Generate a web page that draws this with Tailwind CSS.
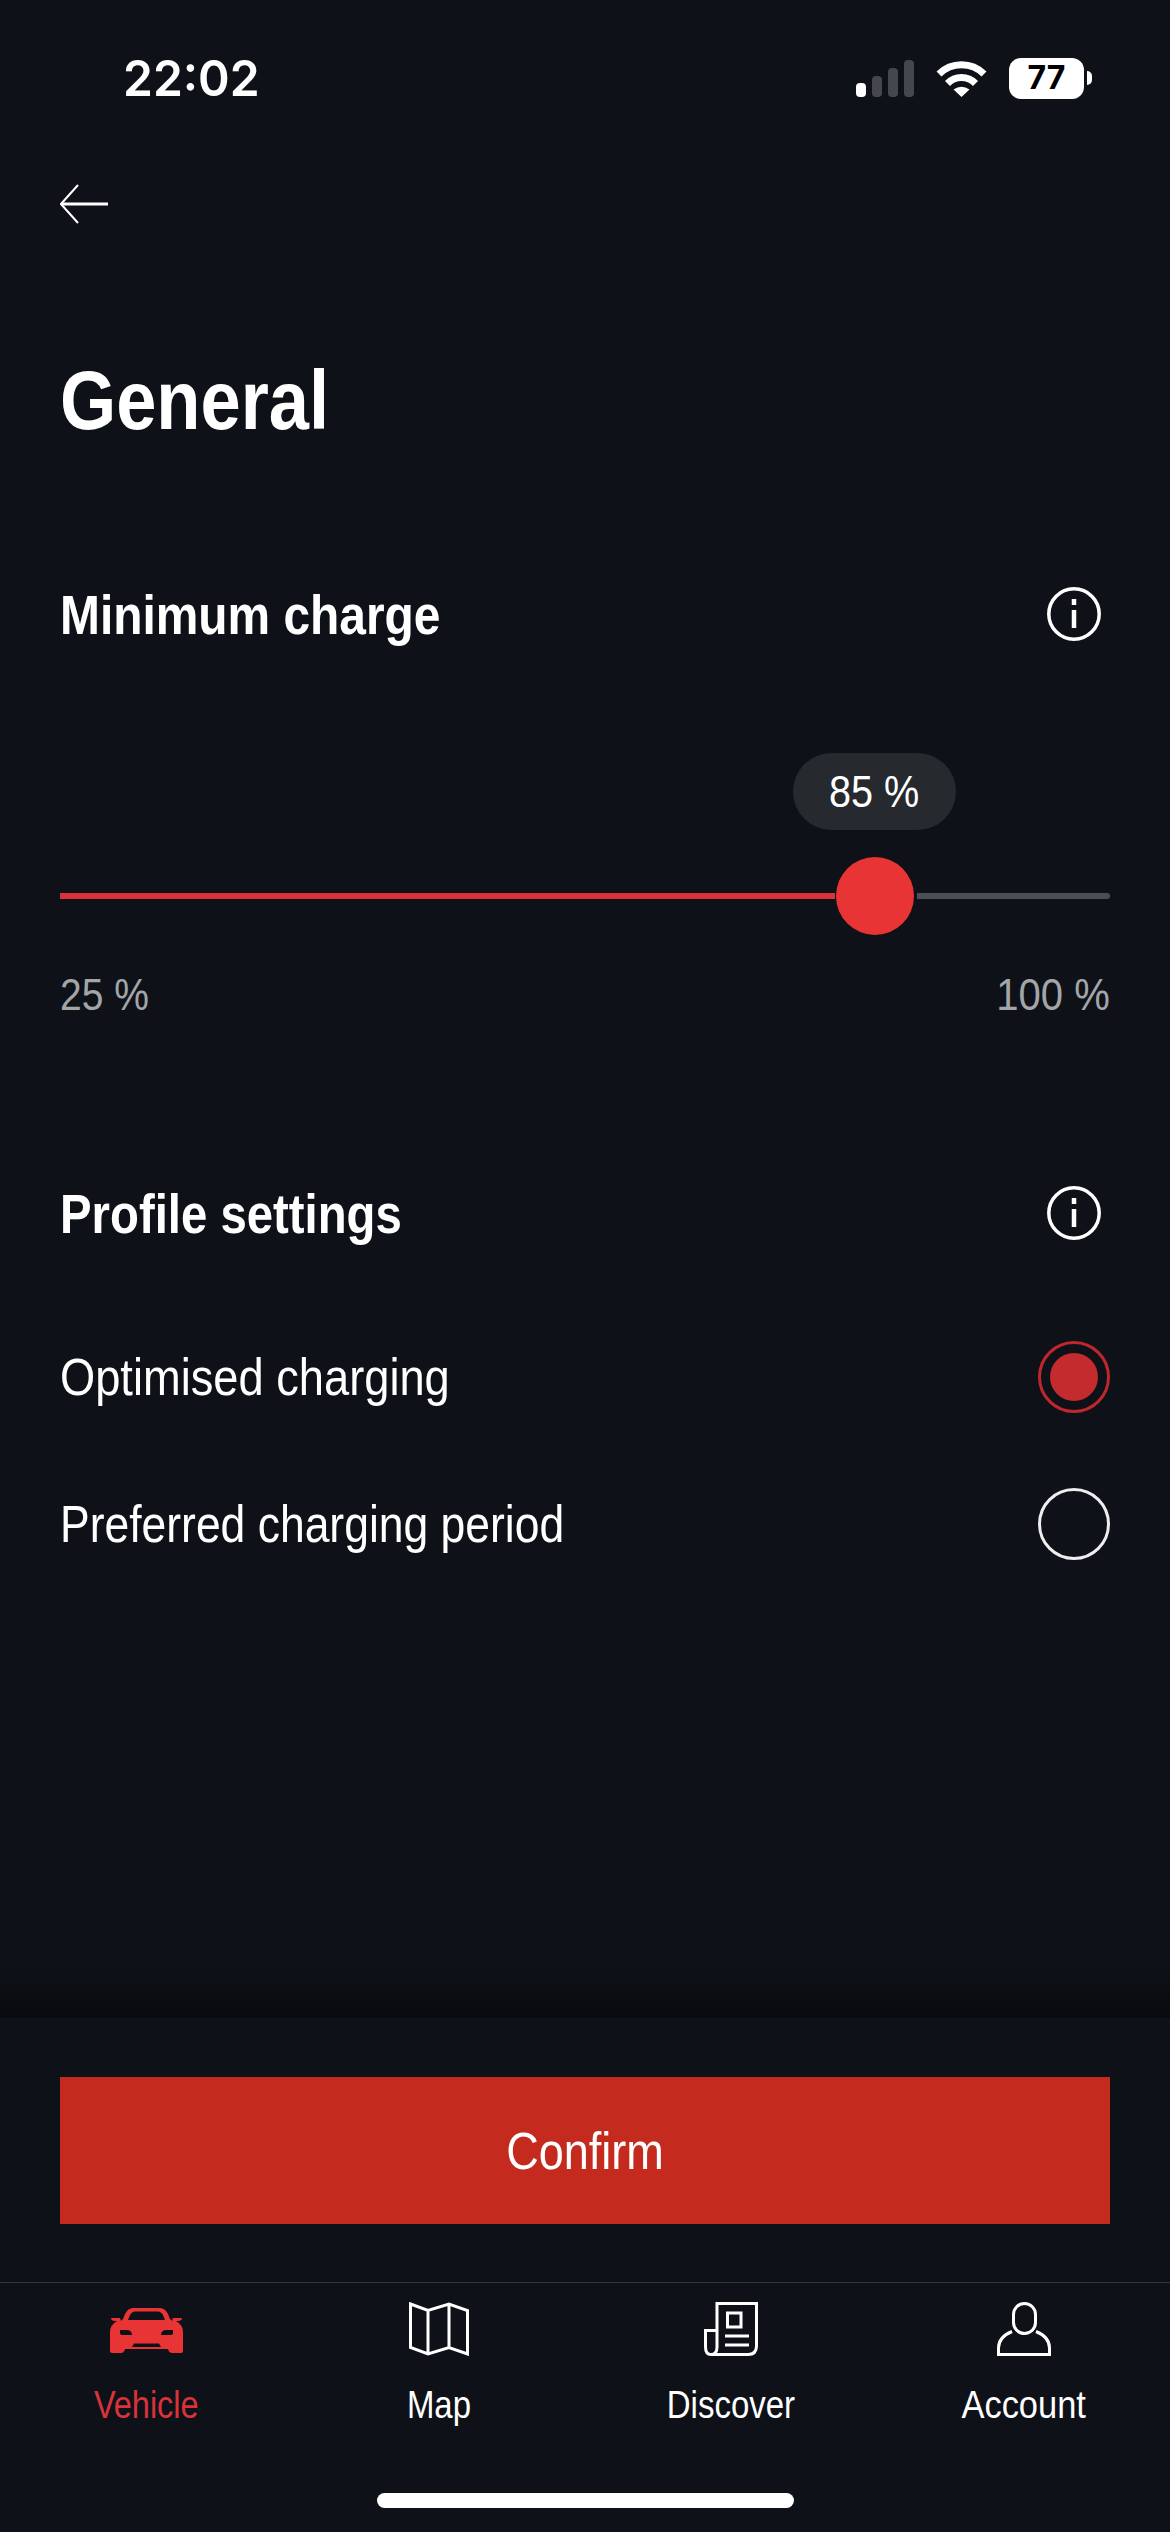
<!DOCTYPE html>
<html lang="en">
<head>
  <meta charset="UTF-8">
  <title>General</title>
  <script src="https://cdn.jsdelivr.net/npm/@tailwindcss/browser@4"></script>
</head>
<body class="bg-[#0e1218]">
  <div class="w-[1170px] h-[2532px] flex flex-col text-white font-['Liberation_Sans',sans-serif]">
    <!-- Status bar -->
    <div class="h-[156px] pl-[123px] pr-[78px] flex items-center justify-between">
      <span class="inline-block origin-left scale-x-[0.96] font-['Inter',sans-serif] font-semibold text-[50px] leading-none">22:02</span>
      <div class="flex items-center">
        <svg width="58" height="37" viewBox="0 0 58 37" fill="#44474c">
          <rect x="0" y="23" width="10" height="14" rx="4" fill="#fff"/>
          <rect x="16" y="16" width="10" height="21" rx="4"/>
          <rect x="32" y="8" width="10" height="29" rx="4"/>
          <rect x="48" y="0" width="10" height="37" rx="4"/>
        </svg>
        <svg class="ml-[22px]" width="51" height="37" viewBox="0 0 51 37" fill="none" stroke="#fff" stroke-width="7">
          <path d="M3 14A32 32 0 0 1 48 14"/>
          <path d="M11.5 23.5A19.5 19.5 0 0 1 39.5 23.5"/>
          <path d="M25.5 37L17.5 29.5Q25.5 24 33.5 29.5Z" fill="#fff" stroke="none"/>
        </svg>
        <div class="ml-[22px] w-[75px] h-[41px] rounded-[12px] bg-white text-black flex items-center justify-center font-['Inter',sans-serif] font-bold text-[32px] leading-none">77</div>
        <div class="ml-[3px] w-[5px] h-[14px] rounded-r-full bg-white"></div>
      </div>
    </div>

    <!-- Back -->
    <div class="h-[96px] pl-[60px] flex items-center">
      <svg width="48" height="40" viewBox="0 0 48 40" fill="none" stroke="#fff" stroke-width="2">
        <path d="M48 20H1" stroke-width="3"/>
        <path d="M18 1L1 20L18 39"/>
      </svg>
    </div>

    <main class="px-[60px] flex flex-col">
      <h1 class="mt-[96px] pt-[2px] h-[100px] leading-[100px] text-[84px] font-bold origin-left scale-x-[0.86]">General</h1>

      <div class="mt-[136px] h-[60px] flex items-center justify-between">
        <h2 class="text-[56px] font-bold leading-none origin-left scale-x-[0.855] translate-y-px">Minimum charge</h2>
        <svg class="mr-[9px]" width="54" height="54" viewBox="0 0 54 54" fill="none" stroke="#fff" stroke-width="3.5">
          <circle cx="27" cy="27" r="25.2"/>
          <path d="M27 23V41M27 12V18" stroke-width="4.5"/>
        </svg>
      </div>

      <!-- Slider -->
      <div class="mt-[109px] ml-[733px] w-[163px] h-[77px] rounded-full bg-[#26292e] flex items-center justify-center text-[44px] leading-none">
        <span class="scale-x-[0.9]">85 %</span>
      </div>
      <div class="mt-[27px] h-[78px] flex items-center">
        <div class="w-[775px] h-[6px] bg-[#d9323a]"></div>
        <div class="ml-[1px] w-[78px] h-[78px] rounded-full bg-[#e93435]"></div>
        <div class="ml-[3px] flex-1 h-[6px] rounded-r-full bg-[#4b4e55]"></div>
      </div>
      <div class="mt-[35px] h-[50px] flex items-center justify-between text-[44px] leading-none text-[#a3a5a9]">
        <span class="origin-left scale-x-[0.887]">25 %</span>
        <span class="origin-right scale-x-[0.91]">100 %</span>
      </div>

      <div class="mt-[163px] h-[60px] flex items-center justify-between">
        <h2 class="text-[56px] font-bold leading-none origin-left scale-x-[0.845] translate-y-px">Profile settings</h2>
        <svg class="mr-[9px]" width="54" height="54" viewBox="0 0 54 54" fill="none" stroke="#fff" stroke-width="3.5">
          <circle cx="27" cy="27" r="25.2"/>
          <path d="M27 23V41M27 12V18" stroke-width="4.5"/>
        </svg>
      </div>

      <div class="mt-[98px] h-[72px] flex items-center justify-between">
        <span class="text-[52px] leading-none origin-left scale-x-[0.87]">Optimised charging</span>
        <div class="w-[72px] h-[72px] rounded-full border-[3px] border-[#c0272d] flex items-center justify-center">
          <div class="w-[48px] h-[48px] rounded-full bg-[#c42b2e]"></div>
        </div>
      </div>
      <div class="mt-[75px] h-[72px] flex items-center justify-between">
        <span class="text-[52px] leading-none origin-left scale-x-[0.855]">Preferred charging period</span>
        <div class="w-[72px] h-[72px] rounded-full border-[3px] border-[#eeeeee]"></div>
      </div>
    </main>

    <!-- Footer -->
    <div class="mt-auto h-[60px] bg-gradient-to-b from-[#0e1218] to-[#090a0e]"></div>
    <footer class="h-[514px] flex flex-col">
      <div class="px-[60px] pt-[59px]">
        <button class="w-full h-[147px] bg-[#c42b1e] text-[52px]"><span class="inline-block scale-x-[0.866]">Confirm</span></button>
      </div>
      <nav class="mt-[58px] border-t border-[#33363b] grid grid-cols-4 pt-[19px]">
        <a class="flex flex-col items-center text-[#d9323a]">
          <svg class="mt-[6px] mb-[3px]" width="73" height="45" viewBox="0 0 73 45" fill="#e93435">
            <path fill-rule="evenodd" d="M13 11L15 6Q18 0 23 0H50Q55 0 58 6L60 11L62 13H66Q73 17 73 24V43Q73 45 71 45H62Q59 45 58 41H15Q14 45 11 45H2Q0 45 0 43V24Q0 17 7 13H11ZM18 12L20 7Q22 3.5 25 3.5H48Q51 3.5 53 7L55 12ZM10 22H18Q22 23 22 27H13Q10 27 10 25ZM63 22H55Q51 23 51 27H60Q63 27 63 25ZM22 39L24 35.5H49L51 39Z"/>
            <path d="M1 10H10L11 13H5Q1 13 1 10ZM72 10H63L62 13H68Q72 13 72 10Z"/>
          </svg>
          <span class="mt-[30px] text-[38px] leading-none scale-x-[0.855]">Vehicle</span>
        </a>
        <a class="flex flex-col items-center">
          <svg width="60" height="54" viewBox="0 0 60 54" fill="none" stroke="#fff" stroke-width="3">
            <path d="M1.5 2L19 8.5L40 2L58.5 8.5V52L40 45.5L19 52L1.5 45.5ZM19 8.5V52M40 2V45.5"/>
          </svg>
          <span class="mt-[30px] text-[38px] leading-none scale-x-[0.867]">Map</span>
        </a>
        <a class="flex flex-col items-center">
          <svg width="54" height="54" viewBox="0 0 54 54" fill="none" stroke="#fff" stroke-width="3">
            <path d="M13 45V1.5H52.5V44Q52.5 52.5 44 52.5H7M13 45Q13 52.5 7 52.5Q1.5 52.5 1.5 45V28.5H13"/>
            <path d="M23.5 11H37V25H23.5ZM21 34H45M21 43H45"/>
          </svg>
          <span class="mt-[30px] text-[38px] leading-none scale-x-[0.868]">Discover</span>
        </a>
        <a class="flex flex-col items-center">
          <svg width="54" height="54" viewBox="0 0 54 54" fill="none" stroke="#fff" stroke-width="3">
            <rect x="16.5" y="1.5" width="22" height="30" rx="11"/>
            <path d="M15 29.5Q1.5 35 1.5 46V52.5H52.5V46Q52.5 35 39 29.5"/>
          </svg>
          <span class="mt-[30px] text-[38px] leading-none scale-x-[0.906]">Account</span>
        </a>
      </nav>
      <div class="mt-auto mb-[24px] mx-auto w-[417px] h-[15px] rounded-full bg-white"></div>
    </footer>
  </div>
</body>
</html>
